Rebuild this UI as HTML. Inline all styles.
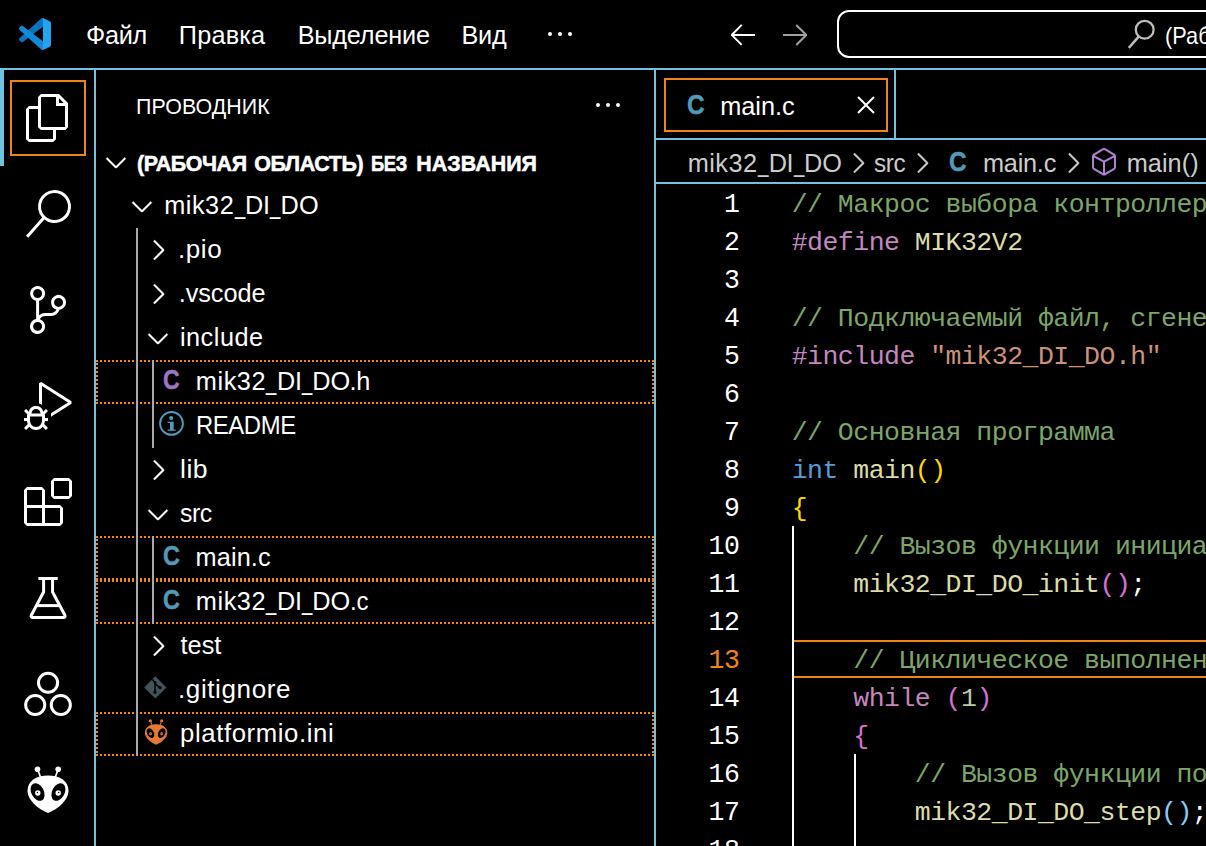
<!DOCTYPE html>
<html lang="ru"><head><meta charset="utf-8"><title>main.c - Visual Studio Code</title>
<style>
html,body{margin:0;padding:0;background:#000;}
body{width:1206px;height:846px;overflow:hidden;position:relative;font-family:"Liberation Sans",sans-serif;color:#fff;}
.ab{position:absolute;}
.ic{position:absolute;overflow:visible;}
.t{position:absolute;white-space:pre;line-height:40px;height:40px;transform-origin:0 50%;}
.hl{position:absolute;background:#6fc3df;}
.gd{position:absolute;width:2px;background:#a9a9a9;}
.eg{position:absolute;width:2px;background:#fff;}
.row{position:absolute;left:96px;width:558px;height:44px;box-sizing:border-box;}
.foc{outline:2px dotted #f38518;outline-offset:-2px;}
.code{position:absolute;left:791.7px;margin-top:2px;white-space:pre;font-family:"Liberation Mono",monospace;font-size:26.5px;letter-spacing:-0.512px;line-height:38px;height:38px;color:#fff;}
.num{position:absolute;left:656px;margin-top:2px;transform:scaleY(1.055);transform-origin:0 26px;width:83.4px;text-align:right;white-space:pre;font-family:"Liberation Mono",monospace;font-size:26.5px;letter-spacing:-0.512px;line-height:38px;height:38px;color:#fff;}
.cm{color:#7ca668}.kw{color:#c586c0}.fn{color:#dcdcaa}.st{color:#ce9178}.ty{color:#569cd6}.nu{color:#b5cea8}
.b1{color:#ffd700}.b2{color:#da70d6}.b3{color:#87cefa}
</style></head><body>

<div class="hl" style="left:0;top:68px;width:1206px;height:2px"></div>
<div class="hl" style="left:94px;top:70px;width:2px;height:776px"></div>
<div class="hl" style="left:654px;top:70px;width:2px;height:776px"></div>
<div class="hl" style="left:656px;top:138px;width:550px;height:2px"></div>
<div class="hl" style="left:894px;top:70px;width:2px;height:68px"></div>
<div class="hl" style="left:656px;top:182px;width:550px;height:2px"></div>
<div class="hl" style="left:0;top:70px;width:4px;height:96px"></div>
<div class="ab" style="left:10px;top:80px;width:72px;height:72px;border:2px solid #f38518"></div>
<div class="ab" style="left:664px;top:78px;width:220px;height:50px;border:2px solid #f38518"></div>
<div class="ab" style="left:837px;top:10px;width:420px;height:44px;border:2px solid #fff;border-radius:12px"></div>
<svg class="ic" style="left:19px;top:18px" width="32" height="32" viewBox="0 0 100 100" ><path fill="#0a74bf" d="M96.4614 10.7962L75.8569 0.875542C73.4719 -0.272773 70.6217 0.211611 68.75 2.08333L1.29858 63.5832C-0.515693 65.2373 -0.513607 68.0937 1.30308 69.7452L6.81272 74.754C8.29793 76.1042 10.5347 76.2036 12.1338 74.9905L93.3609 13.3699C96.086 11.3026 100 13.2462 100 16.6667V16.4275C100 14.0265 98.6246 11.8378 96.4614 10.7962Z"/><path fill="#1389dc" d="M96.4614 89.2038L75.8569 99.1245C73.4719 100.273 70.6217 99.7884 68.75 97.9167L1.29858 36.4169C-0.515693 34.7627 -0.513607 31.9063 1.30308 30.2548L6.81272 25.246C8.29793 23.8958 10.5347 23.7964 12.1338 25.0095L93.3609 86.6301C96.086 88.6974 100 86.7538 100 83.3334V83.5726C100 85.9735 98.6246 88.1622 96.4614 89.2038Z"/><path fill="#23a4f2" d="M75.8578 99.1263C73.4721 100.274 70.6219 99.7885 68.75 97.9166C71.0564 100.223 75 98.5895 75 95.3278V4.67213C75 1.41039 71.0564 -0.223106 68.75 2.08329C70.6219 0.211402 73.4721 -0.273666 75.8578 0.873633L96.4587 10.7807C98.6234 11.8217 100 14.0112 100 16.4132V83.5871C100 85.9891 98.6234 88.1786 96.4586 89.2196L75.8578 99.1263Z"/></svg>
<svg class="ic" style="left:544px;top:18px" width="32" height="32" viewBox="0 0 16 16" ><path d="M4 8a1 1 0 1 1-2 0 1 1 0 0 1 2 0zm5 0a1 1 0 1 1-2 0 1 1 0 0 1 2 0zm5 0a1 1 0 1 1-2 0 1 1 0 0 1 2 0z" fill="#fff" /></svg>
<svg class="ic" style="left:727px;top:18px" width="32" height="32" viewBox="0 0 16 16" ><path d="M7 3.093l-5 5V8.8l5 5 .707-.707-4.146-4.147H14v-1H3.56L7.708 3.8 7 3.093z" fill="#fff" /></svg>
<svg class="ic" style="left:779px;top:18px" width="32" height="32" viewBox="0 0 16 16" ><path d="M9 13.887l5-5V8.18l-5-5-.707.707 4.146 4.147H2v1h10.44L8.292 13.18l.707.707z" fill="#a0a0a0" /></svg>
<svg class="ic" style="left:1120px;top:14px" width="40" height="40" viewBox="0 0 40 40"><circle cx="24.7" cy="15.7" r="8.9" fill="none" stroke="#bdbdbd" stroke-width="2.3"/><path d="M18.9 22.4L8.8 33.8" stroke="#bdbdbd" stroke-width="2.5" fill="none"/></svg>
<svg class="ic" style="left:24px;top:94px" width="48" height="48" viewBox="0 0 24 24" ><path d="M17.5 0h-9L7 1.5V6H2.5L1 7.5v15.07L2.5 24h12.07L16 22.57V18h4.7l1.3-1.43V4.5L17.5 0zm0 2.12l2.38 2.38H17.5V2.12zm-3 20.38h-12v-15H7v9.07L8.5 18h6v4.5zm6-6h-12v-15H16V6h4.5v10.5z" fill="#fff" /></svg>
<svg class="ic" style="left:24px;top:190px" width="48" height="48" viewBox="0 0 24 24" ><path d="M15.25 0a8.25 8.25 0 0 0-6.18 13.72L1 22.88l1.12 1 8.05-9.12A8.251 8.251 0 1 0 15.25.01V0zm0 15a6.75 6.75 0 1 1 0-13.5 6.75 6.75 0 0 1 0 13.5z" fill="#fff" /></svg>
<svg class="ic" style="left:24px;top:286px" width="48" height="48" viewBox="0 0 24 24" ><path d="M21.007 8.222A3.738 3.738 0 0 0 15.045 5.2a3.737 3.737 0 0 0 1.156 6.583 2.988 2.988 0 0 1-2.668 1.67h-2.99a4.456 4.456 0 0 0-2.989 1.165V7.4a3.737 3.737 0 1 0-1.494 0v9.117a3.776 3.776 0 1 0 1.816.099 2.99 2.99 0 0 1 2.668-1.667h2.99a4.484 4.484 0 0 0 4.223-3.039 3.736 3.736 0 0 0 3.25-3.687zM4.565 3.738a2.242 2.242 0 1 1 4.484 0 2.242 2.242 0 0 1-4.484 0zm4.484 16.441a2.242 2.242 0 1 1-4.484 0 2.242 2.242 0 0 1 4.484 0zm8.221-9.715a2.242 2.242 0 1 1 0-4.485 2.242 2.242 0 0 1 0 4.485z" fill="#fff" /></svg>
<svg class="ic" style="left:24px;top:382px" width="48" height="48" viewBox="0 0 24 24" ><path d="M10.94 13.5l-1.32 1.32a3.73 3.73 0 0 0-7.24 0L1.06 13.5 0 14.56l1.72 1.72-.22.22V18H0v1.5h1.5v.08c.077.489.214.966.41 1.42L0 22.94 1.06 24l1.65-1.65A4.308 4.308 0 0 0 6 24a4.31 4.31 0 0 0 3.29-1.65L10.94 24 12 22.94 10.09 21c.198-.464.336-.951.41-1.45v-.1H12V18h-1.5v-1.5l-.22-.22L12 14.56l-1.06-1.06zM6 13.5a2.25 2.25 0 0 1 2.25 2.25h-4.5A2.25 2.25 0 0 1 6 13.5zm3 6a3.33 3.33 0 0 1-3 3 3.33 3.33 0 0 1-3-3v-2.25h6v2.25zm14.76-9.9v1.26L13.5 17.37V15.6l8.5-5.37L9 2v9.46a5.07 5.07 0 0 0-1.5-.72V.63L8.64 0l15.12 9.6z" fill="#fff" /></svg>
<svg class="ic" style="left:24px;top:478px" width="48" height="48" viewBox="0 0 24 24" ><path d="M13.5 1.5L15 0h7.5L24 1.5V9l-1.5 1.5H15L13.5 9V1.5zm1.5 0V9h7.5V1.5H15zM0 15V6l1.5-1.5H9L10.5 6v7.5H18l1.5 1.5v7.5L18 24H1.5L0 22.5V15zm9-1.5V6H1.5v7.5H9zM9 15H1.5v7.5H9V15zm1.5 7.5H18V15h-7.5v7.5z" fill="#fff" /></svg>
<svg class="ic" style="left:24px;top:574px" width="48" height="48" viewBox="0 0 48 48"><g fill="none" stroke="#fff" stroke-width="3" stroke-linejoin="round"><path d="M14.4 4.5H33.7"/><path d="M19.6 4.5V18L7.3 41.2Q6.5 43.4 8.8 43.4H39.4Q41.7 43.4 40.9 41.2L28.55 18V4.5"/><path d="M12.4 31.6H35.8"/></g></svg>
<svg class="ic" style="left:24px;top:670px" width="48" height="48" viewBox="0 0 48 48"><g fill="none" stroke="#fff" stroke-width="3"><circle cx="24.05" cy="12.8" r="9.55"/><circle cx="11.2" cy="35" r="9.55"/><circle cx="36.8" cy="35" r="9.55"/></g></svg>
<svg class="ic" style="left:24px;top:766px" width="48" height="48" viewBox="0 0 48 48" ><g fill="#fff" stroke="none"><path d="M24 9.5C12 9.5 3.5 15 3.5 25C3.5 34 14 43 24 47C34 43 44.5 34 44.5 25C44.5 15 36 9.5 24 9.5Z"/><circle cx="13.5" cy="3.2" r="2.8"/><circle cx="34.2" cy="3.2" r="2.8"/><path d="M12.8 3.5L14.4 2.9L17.9 12.5L16.3 13.1Z"/><path d="M34.9 3.5L33.3 2.9L30 12.5L31.6 13.1Z"/></g><g fill="#000"><ellipse cx="13.6" cy="26" rx="6.2" ry="9.4" transform="rotate(-28 13.6 26)"/><ellipse cx="34.4" cy="26" rx="6.2" ry="9.4" transform="rotate(28 34.4 26)"/></g><g fill="#fff"><circle cx="13.8" cy="27" r="2.7"/><circle cx="34.2" cy="27" r="2.7"/></g><g fill="#000"><circle cx="13.4" cy="26.5" r="0.7"/><circle cx="34.7" cy="26.5" r="0.7"/></g></svg>
<svg class="ic" style="left:592px;top:89px" width="32" height="32" viewBox="0 0 16 16" ><path d="M4 8a1 1 0 1 1-2 0 1 1 0 0 1 2 0zm5 0a1 1 0 1 1-2 0 1 1 0 0 1 2 0zm5 0a1 1 0 1 1-2 0 1 1 0 0 1 2 0z" fill="#fff" /></svg>
<svg class="ic" style="left:100px;top:146px" width="32" height="32" viewBox="0 0 16 16" ><path d="M7.976 10.072l4.357-4.357.62.618L8.284 11h-.618L3 6.333l.619-.618 4.357 4.357z" fill="#fff" stroke="#fff" stroke-width="0.2"/></svg>
<div class="row foc" style="top:360px"></div>
<div class="row foc" style="top:536px"></div>
<div class="row foc" style="top:580px"></div>
<div class="row foc" style="top:712px"></div>
<div class="gd" style="left:136px;top:228px;height:528px"></div>
<div class="gd" style="left:152px;top:360px;height:88px"></div>
<div class="gd" style="left:152px;top:536px;height:88px"></div>
<svg class="ic" style="left:126px;top:190px" width="32" height="32" viewBox="0 0 16 16" ><path d="M7.976 10.072l4.357-4.357.62.618L8.284 11h-.618L3 6.333l.619-.618 4.357 4.357z" fill="#fff" stroke="#fff" stroke-width="0.2"/></svg>
<svg class="ic" style="left:142px;top:234px" width="32" height="32" viewBox="0 0 16 16" ><path d="M10.072 8.024L5.715 3.667l.618-.62L11 7.716v.618L6.333 13l-.618-.619 4.357-4.357z" fill="#fff" stroke="#fff" stroke-width="0.2"/></svg>
<svg class="ic" style="left:142px;top:278px" width="32" height="32" viewBox="0 0 16 16" ><path d="M10.072 8.024L5.715 3.667l.618-.62L11 7.716v.618L6.333 13l-.618-.619 4.357-4.357z" fill="#fff" stroke="#fff" stroke-width="0.2"/></svg>
<svg class="ic" style="left:142px;top:322px" width="32" height="32" viewBox="0 0 16 16" ><path d="M7.976 10.072l4.357-4.357.62.618L8.284 11h-.618L3 6.333l.619-.618 4.357 4.357z" fill="#fff" stroke="#fff" stroke-width="0.2"/></svg>
<svg class="ic" style="left:142px;top:454px" width="32" height="32" viewBox="0 0 16 16" ><path d="M10.072 8.024L5.715 3.667l.618-.62L11 7.716v.618L6.333 13l-.618-.619 4.357-4.357z" fill="#fff" stroke="#fff" stroke-width="0.2"/></svg>
<svg class="ic" style="left:142px;top:498px" width="32" height="32" viewBox="0 0 16 16" ><path d="M7.976 10.072l4.357-4.357.62.618L8.284 11h-.618L3 6.333l.619-.618 4.357 4.357z" fill="#fff" stroke="#fff" stroke-width="0.2"/></svg>
<svg class="ic" style="left:142px;top:630px" width="32" height="32" viewBox="0 0 16 16" ><path d="M10.072 8.024L5.715 3.667l.618-.62L11 7.716v.618L6.333 13l-.618-.619 4.357-4.357z" fill="#fff" stroke="#fff" stroke-width="0.2"/></svg>
<svg class="ic" style="left:158px;top:410px" width="28" height="28" viewBox="0 0 28 28"><circle cx="13.5" cy="13.4" r="11.4" fill="none" stroke="#519aba" stroke-width="1.9"/><g fill="#519aba"><circle cx="13.2" cy="8" r="2.1"/><path d="M9.6 11.7H15.7V19.6H17.6V20.8H9.6V19.6H12V12.9H9.6Z"/></g></svg>
<svg class="ic" style="left:143px;top:675px" width="24" height="24" viewBox="0 0 24 24"><path d="M12.3 1.3L23.4 12.4L12.3 23.5L1.2 12.4Z" fill="#41535b"/><g stroke="#000" stroke-width="1.5" fill="none"><path d="M9.5 4.5L12 7.5V16.5"/><path d="M12 8.5L16.3 12.3"/></g><g fill="#000"><circle cx="12" cy="17.2" r="1.7"/><circle cx="17" cy="12.6" r="1.7"/><circle cx="12" cy="7.6" r="1.4"/></g></svg>
<svg class="ic" style="left:142.9px;top:718.5px" width="26.2" height="26.2" viewBox="0 0 48 48" ><g fill="#e37933" stroke="none"><path d="M24 9.5C12 9.5 3.5 15 3.5 25C3.5 34 14 43 24 47C34 43 44.5 34 44.5 25C44.5 15 36 9.5 24 9.5Z"/><circle cx="13.5" cy="3.2" r="2.8"/><circle cx="34.2" cy="3.2" r="2.8"/><path d="M12.8 3.5L14.4 2.9L17.9 12.5L16.3 13.1Z"/><path d="M34.9 3.5L33.3 2.9L30 12.5L31.6 13.1Z"/></g><g fill="#000"><ellipse cx="13.6" cy="26" rx="6.2" ry="9.4" transform="rotate(-28 13.6 26)"/><ellipse cx="34.4" cy="26" rx="6.2" ry="9.4" transform="rotate(28 34.4 26)"/></g><g fill="#e37933"><circle cx="13.8" cy="27" r="2.7"/><circle cx="34.2" cy="27" r="2.7"/></g><g fill="#000"><circle cx="13.4" cy="26.5" r="0.7"/><circle cx="34.7" cy="26.5" r="0.7"/></g></svg>
<svg class="ic" style="left:850px;top:89px" width="32" height="32" viewBox="0 0 16 16" ><path d="M8 8.707l3.646 3.647.708-.707L8.707 8l3.647-3.646-.707-.708L8 7.293 4.354 3.646l-.707.708L7.293 8l-3.646 3.646.707.708L8 8.707z" fill="#fff" /></svg>
<svg class="ic" style="left:841.8px;top:146.5px" width="32" height="32" viewBox="0 0 16 16" ><path d="M10.072 8.024L5.715 3.667l.618-.62L11 7.716v.618L6.333 13l-.618-.619 4.357-4.357z" fill="#cccccc" stroke="#cccccc" stroke-width="0.2"/></svg>
<svg class="ic" style="left:906.4px;top:146.5px" width="32" height="32" viewBox="0 0 16 16" ><path d="M10.072 8.024L5.715 3.667l.618-.62L11 7.716v.618L6.333 13l-.618-.619 4.357-4.357z" fill="#cccccc" stroke="#cccccc" stroke-width="0.2"/></svg>
<svg class="ic" style="left:1056.6px;top:146.5px" width="32" height="32" viewBox="0 0 16 16" ><path d="M10.072 8.024L5.715 3.667l.618-.62L11 7.716v.618L6.333 13l-.618-.619 4.357-4.357z" fill="#cccccc" stroke="#cccccc" stroke-width="0.2"/></svg>
<svg class="ic" style="left:1088.4px;top:146px" width="32" height="32" viewBox="0 0 16 16" ><path d="M13.51 4l-5-3h-1l-5 3-.49.86v6l.49.85 5 3h1l5-3 .49-.85v-6L13.51 4zm-6 9.56l-4.5-2.7V5.7l4.5 2.45v5.41zM3.27 4.7l4.74-2.84 4.74 2.84-4.74 2.59L3.27 4.7zm9.74 6.16l-4.5 2.7V8.15l4.5-2.45v5.16z" fill="#b180d7" /></svg>
<div class="ab" style="left:793px;top:640px;width:420px;height:34px;border-top:2px solid #f38518;border-bottom:2px solid #f38518"></div>
<div class="eg" style="left:792px;top:526px;height:320px"></div>
<div class="eg" style="left:854px;top:754px;height:92px"></div>
<div class="num" style="top:184px">1</div>
<div class="code" style="top:184px"><span class="cm">// Макрос выбора контроллера MIK32V0 или MIK32V2</span></div>
<div class="num" style="top:222px">2</div>
<div class="code" style="top:222px"><span class="kw">#define</span> <span class="fn">MIK32V2</span></div>
<div class="num" style="top:260px">3</div>
<div class="num" style="top:298px">4</div>
<div class="code" style="top:298px"><span class="cm">// Подключаемый файл, сгенерированный автоматически</span></div>
<div class="num" style="top:336px">5</div>
<div class="code" style="top:336px"><span class="kw">#include</span> <span class="st">"mik32_DI_DO.h"</span></div>
<div class="num" style="top:374px">6</div>
<div class="num" style="top:412px">7</div>
<div class="code" style="top:412px"><span class="cm">// Основная программа</span></div>
<div class="num" style="top:450px">8</div>
<div class="code" style="top:450px"><span class="ty">int</span> <span class="fn">main</span><span class="b1">()</span></div>
<div class="num" style="top:488px">9</div>
<div class="code" style="top:488px"><span class="b1">{</span></div>
<div class="num" style="top:526px">10</div>
<div class="code" style="top:526px">    <span class="cm">// Вызов функции инициализации</span></div>
<div class="num" style="top:564px">11</div>
<div class="code" style="top:564px">    <span class="fn">mik32_DI_DO_init</span><span class="b2">()</span>;</div>
<div class="num" style="top:602px">12</div>
<div class="num" style="top:640px;color:#f38518">13</div>
<div class="code" style="top:640px">    <span class="cm">// Циклическое выполнение шагов</span></div>
<div class="num" style="top:678px">14</div>
<div class="code" style="top:678px">    <span class="kw">while</span> <span class="b2">(</span><span class="nu">1</span><span class="b2">)</span></div>
<div class="num" style="top:716px">15</div>
<div class="code" style="top:716px">    <span class="b2">{</span></div>
<div class="num" style="top:754px">16</div>
<div class="code" style="top:754px">        <span class="cm">// Вызов функции пошагового выполнения</span></div>
<div class="num" style="top:792px">17</div>
<div class="code" style="top:792px">        <span class="fn">mik32_DI_DO_step</span><span class="b3">()</span>;</div>
<div class="num" style="top:830px">18</div>
<div class="t" id="m1" style="left:85.83px;top:14.71px;font-size:25.3px;color:#fff;letter-spacing:-0.309px;transform:scaleX(0.9983);">Файл</div>
<div class="t" id="m2" style="left:178.84px;top:14.71px;font-size:25.3px;color:#fff;letter-spacing:0.181px;">Правка</div>
<div class="t" id="m3" style="left:297.68px;top:14.71px;font-size:25.3px;color:#fff;letter-spacing:-0.213px;">Выделение</div>
<div class="t" id="m4" style="left:461.56px;top:14.71px;font-size:25.3px;color:#fff;letter-spacing:-0.318px;">Вид</div>
<div class="t" id="h1" style="left:135.96px;top:86.91px;font-size:21.4px;color:#fff;letter-spacing:0.053px;">ПРОВОДНИК</div>
<div class="t" id="h2a" style="left:136.91px;top:143.91px;font-size:21.4px;font-weight:700;-webkit-text-stroke:0.55px #fff;color:#fff;letter-spacing:-0.382px;">(РАБОЧАЯ</div>
<div class="t" id="h2b" style="left:254.34px;top:143.91px;font-size:21.4px;font-weight:700;-webkit-text-stroke:0.55px #fff;color:#fff;letter-spacing:-0.365px;">ОБЛАСТЬ)</div>
<div class="t" id="h2c" style="left:371.06px;top:143.91px;font-size:21.4px;font-weight:700;-webkit-text-stroke:0.55px #fff;color:#fff;letter-spacing:-0.448px;transform:scaleX(0.8596);">БЕЗ</div>
<div class="t" id="h2d" style="left:416.31px;top:143.91px;font-size:21.4px;font-weight:700;-webkit-text-stroke:0.55px #fff;color:#fff;letter-spacing:0.053px;">НАЗВАНИЯ</div>
<div class="t" id="r0a" style="left:164.15px;top:184.81px;font-size:25.3px;color:#fff;letter-spacing:0.521px;">mik32</div>
<div class="t" id="r0b" style="left:234.55px;top:184.81px;font-size:25.3px;color:#fff;letter-spacing:0.000px;transform:scaleX(0.7327);">_</div>
<div class="t" id="r0c" style="left:244.97px;top:184.81px;font-size:25.3px;color:#fff;letter-spacing:-0.144px;transform:scaleX(0.9985);">DI</div>
<div class="t" id="r0d" style="left:270.45px;top:184.81px;font-size:25.3px;color:#fff;letter-spacing:0.000px;transform:scaleX(0.7294);">_</div>
<div class="t" id="r0e" style="left:280.56px;top:184.81px;font-size:25.3px;color:#fff;letter-spacing:0.106px;">DO</div>
<div class="t" id="r4a" style="left:195.84px;top:360.81px;font-size:25.3px;color:#fff;letter-spacing:0.567px;">mik32</div>
<div class="t" id="r4b" style="left:266.46px;top:360.81px;font-size:25.3px;color:#fff;letter-spacing:0.000px;transform:scaleX(0.7336);">_</div>
<div class="t" id="r4c" style="left:277.15px;top:360.81px;font-size:25.3px;color:#fff;letter-spacing:-0.155px;transform:scaleX(0.9972);">DI</div>
<div class="t" id="r4d" style="left:302.40px;top:360.81px;font-size:25.3px;color:#fff;letter-spacing:0.000px;transform:scaleX(0.7284);">_</div>
<div class="t" id="r4e" style="left:312.35px;top:360.81px;font-size:25.3px;color:#fff;letter-spacing:-0.024px;">DO</div>
<div class="t" id="r4f" style="left:349.59px;top:360.81px;font-size:25.3px;color:#fff;letter-spacing:-0.259px;">.h</div>
<div class="t" id="r9a" style="left:195.84px;top:580.81px;font-size:25.3px;color:#fff;letter-spacing:0.567px;">mik32</div>
<div class="t" id="r9b" style="left:266.46px;top:580.81px;font-size:25.3px;color:#fff;letter-spacing:0.000px;transform:scaleX(0.7336);">_</div>
<div class="t" id="r9c" style="left:277.15px;top:580.81px;font-size:25.3px;color:#fff;letter-spacing:-0.155px;transform:scaleX(0.9972);">DI</div>
<div class="t" id="r9d" style="left:302.40px;top:580.81px;font-size:25.3px;color:#fff;letter-spacing:0.000px;transform:scaleX(0.7284);">_</div>
<div class="t" id="r9e" style="left:312.35px;top:580.81px;font-size:25.3px;color:#fff;letter-spacing:-0.024px;">DO</div>
<div class="t" id="r9f" style="left:349.65px;top:580.81px;font-size:25.3px;color:#fff;letter-spacing:-0.229px;transform:scaleX(0.9499);">.c</div>
<div class="t" id="b1a" style="left:687.63px;top:142.90px;font-size:25.3px;color:#cccccc;letter-spacing:0.494px;">mik32</div>
<div class="t" id="b1b" style="left:757.82px;top:142.90px;font-size:25.3px;color:#cccccc;letter-spacing:0.000px;transform:scaleX(0.7382);">_</div>
<div class="t" id="b1c" style="left:768.66px;top:142.90px;font-size:25.3px;color:#cccccc;letter-spacing:-0.382px;">DI</div>
<div class="t" id="b1d" style="left:793.72px;top:142.90px;font-size:25.3px;color:#cccccc;letter-spacing:0.000px;transform:scaleX(0.7356);">_</div>
<div class="t" id="b1e" style="left:803.98px;top:142.90px;font-size:25.3px;color:#cccccc;letter-spacing:-0.103px;">DO</div>
<div class="t" id="r1" style="left:178.35px;top:228.81px;font-size:25.3px;color:#fff;letter-spacing:0.554px;transform:scaleX(1.0287);">.pio</div>
<div class="t" id="r2" style="left:178.77px;top:272.81px;font-size:25.3px;color:#fff;letter-spacing:-0.075px;">.vscode</div>
<div class="t" id="r3" style="left:179.90px;top:316.81px;font-size:25.3px;color:#fff;letter-spacing:0.516px;">include</div>
<div class="t" id="r5" style="left:195.68px;top:404.81px;font-size:25.3px;color:#fff;letter-spacing:-0.437px;transform:scaleX(0.9438);">README</div>
<div class="t" id="r6" style="left:179.73px;top:448.81px;font-size:25.3px;color:#fff;letter-spacing:0.462px;transform:scaleX(1.0501);">lib</div>
<div class="t" id="r7" style="left:180.37px;top:492.81px;font-size:25.3px;color:#fff;letter-spacing:-0.440px;transform:scaleX(0.9769);">src</div>
<div class="t" id="r8" style="left:195.57px;top:536.81px;font-size:25.3px;color:#fff;letter-spacing:0.104px;">main.c</div>
<div class="t" id="r10" style="left:180.40px;top:624.81px;font-size:25.3px;color:#fff;letter-spacing:0.076px;">test</div>
<div class="t" id="r11" style="left:178.42px;top:668.81px;font-size:25.3px;color:#fff;letter-spacing:0.582px;transform:scaleX(1.0290);">.gitignore</div>
<div class="t" id="r12" style="left:179.56px;top:712.81px;font-size:25.3px;color:#fff;letter-spacing:0.583px;transform:scaleX(1.0180);">platformio.ini</div>
<div class="t" id="tb" style="left:720.15px;top:86.01px;font-size:25.3px;color:#fff;letter-spacing:0.005px;">main.c</div>
<div class="t" id="b2" style="left:873.91px;top:142.90px;font-size:25.3px;color:#cccccc;letter-spacing:-0.368px;transform:scaleX(0.9604);">src</div>
<div class="t" id="b3" style="left:982.96px;top:142.90px;font-size:25.3px;color:#cccccc;letter-spacing:-0.233px;">main.c</div>
<div class="t" id="b4" style="left:1126.63px;top:142.90px;font-size:25.3px;color:#cccccc;letter-spacing:0.078px;">main()</div>
<div class="t" id="c1" style="left:162.75px;top:360.31px;font-size:27.7px;font-weight:700;-webkit-text-stroke:0.45px #a074c4;color:#a074c4;letter-spacing:0.000px;transform:scaleX(0.8346);">C</div>
<div class="t" id="c2" style="left:163.47px;top:536.31px;font-size:27.7px;font-weight:700;-webkit-text-stroke:0.45px #519aba;color:#519aba;letter-spacing:0.000px;transform:scaleX(0.8474);">C</div>
<div class="t" id="c3" style="left:163.47px;top:580.31px;font-size:27.7px;font-weight:700;-webkit-text-stroke:0.45px #519aba;color:#519aba;letter-spacing:0.000px;transform:scaleX(0.8474);">C</div>
<div class="t" id="c4" style="left:686.73px;top:85.31px;font-size:27.7px;font-weight:700;-webkit-text-stroke:0.45px #519aba;color:#519aba;letter-spacing:0.000px;transform:scaleX(0.8825);">C</div>
<div class="t" id="c5" style="left:949.35px;top:142.01px;font-size:27.7px;font-weight:700;-webkit-text-stroke:0.45px #519aba;color:#519aba;letter-spacing:0.000px;transform:scaleX(0.8804);">C</div>
<div class="t" id="q1" style="left:1164.80px;top:15.69px;font-size:23.4px;color:#fff;letter-spacing:0.000px;transform:scaleX(0.9300);">(Рабочая область) Без названия</div>

</body></html>
